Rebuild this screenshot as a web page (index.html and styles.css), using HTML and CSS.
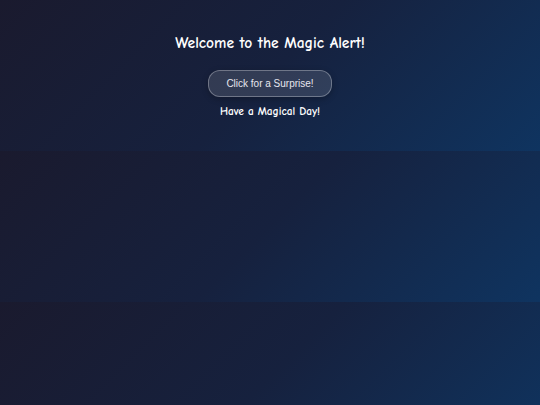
FILE: index.html
```html
<!DOCTYPE html>
<html lang="en">
<head>
    <meta charset="UTF-8">
    <meta name="viewport" content="width=device-width, initial-scale=1.0">
    <title>Magic Alert</title>
    <link rel="stylesheet" href="styles.css">
</head>
<body>
    <div class="container">
        <h1>Welcome to the Magic Alert!</h1>
        <button class="btn" onclick="alert('Surprise!')">Click for a Surprise!</button>
        <p class="note">Have a Magical Day!</p>
    </div>
</body>
</html>
```

FILE: styles.css
```css
html {
    background: linear-gradient(135deg, #1a1a2e, #16213e, #0f3460);
    background-size: 100% 151px;
}

body {
    font-family: 'Comic Sans MS', 'Comic Neue', cursive;
    color: #fff;
    margin: 0;
    padding: 20px;
}

.container {
    text-align: center;
    padding-top: 10px;
}

h1 {
    font-size: 15.5px;
    margin: 4px 0 18px;
}

.btn {
    font-family: 'Liberation Sans', Arial, sans-serif;
    font-size: 10px;
    color: #e6e6ee;
    background-color: rgba(255, 255, 255, 0.12);
    border: 1px solid rgba(255, 255, 255, 0.3);
    border-radius: 12px;
    padding: 7px 17px;
    box-shadow: 0 2px 6px rgba(0, 0, 0, 0.25);
    cursor: pointer;
}

.note {
    font-size: 11.3px;
    font-weight: bold;
    margin: 8px 0 0;
}
```
